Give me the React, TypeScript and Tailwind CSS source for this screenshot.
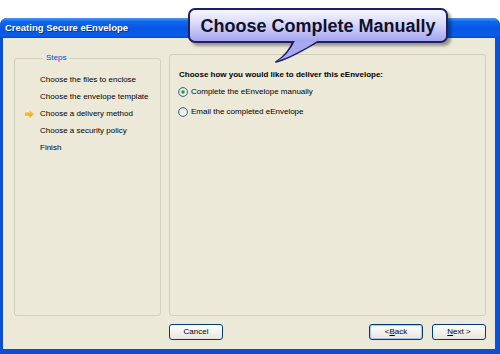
import React from "react";

const font = { fontFamily: '"Liberation Sans", Arial, sans-serif' };

function Radio({ checked }: { checked?: boolean }) {
  return (
    <svg width="10" height="10" viewBox="0 0 10 10" className="shrink-0">
      <defs>
        <linearGradient id={checked ? "rg1" : "rg2"} x1="0" y1="0" x2="1" y2="1">
          <stop offset="0" stopColor="#DCDCD6" />
          <stop offset="1" stopColor="#FFFFFF" />
        </linearGradient>
      </defs>
      <circle cx="5" cy="5" r="4.4" fill={`url(#${checked ? "rg1" : "rg2"})`} stroke="#1C5180" strokeWidth="0.9" />
      {checked && <circle cx="5" cy="5" r="1.8" fill="#21A121" />}
    </svg>
  );
}

function Btn({ children, def }: { children: React.ReactNode; def?: boolean }) {
  return (
    <div
      className={`w-[54px] h-[16px] rounded-[3px] border border-[#003C74] bg-gradient-to-b from-white to-[#E6E5DE] flex items-center justify-center text-[8px] text-black ${def ? "shadow-[inset_0_0_0_1px_#A9C4F5]" : ""}`}
      style={font}
    >
      {children}
    </div>
  );
}

export default function App() {
  return (
    <div className="relative w-[500px] h-[354px] bg-white overflow-hidden" style={font}>
      <div className="absolute left-0 top-[18px] w-[500px] h-[336px] flex flex-col rounded-t-[7px] bg-[#0A4FD8] overflow-hidden">
        <div className="h-[20px] shrink-0 flex items-center pl-[5px] bg-[linear-gradient(to_bottom,#4A98F8_0%,#1066EA_18%,#0556E4_55%,#0A5CE8_88%,#0648CC_100%)]">
          <span className="text-white text-[9.5px] font-bold [text-shadow:1px_1px_0_#0A2F9A]">Creating Secure eEnvelope</span>
        </div>
        <div className="flex-1 ml-[3px] mr-[5px] mb-[5px] bg-[#ECE9D8] flex flex-col pt-[15px] pl-[11px] pr-[9px] pb-[9px]">
          <div className="flex gap-[8px] h-[263px]">
            <fieldset className="w-[147px] border border-[#D0D0BF] rounded-[3px] pl-[25px] pt-[8px]">
              <legend className="ml-[3px] px-[3px] text-[8px] text-[#0046D5] leading-[10px]">Steps</legend>
              <div className="flex flex-col text-[8px] text-black leading-[17px]">
                <span>Choose the files to enclose</span>
                <span>Choose the envelope template</span>
                <span className="relative">
                  <svg className="absolute left-[-15px] top-[5px]" width="9" height="8" viewBox="0 0 9 8">
                    <defs>
                      <linearGradient id="ar" x1="0" y1="0" x2="0" y2="1">
                        <stop offset="0" stopColor="#FCD650" />
                        <stop offset="1" stopColor="#E0A010" />
                      </linearGradient>
                    </defs>
                    <path d="M0 2.2 H4.5 V0 L9 4 L4.5 8 V5.8 H0 Z" fill="url(#ar)" />
                  </svg>
                  Choose a delivery method
                </span>
                <span>Choose a security policy</span>
                <span>Finish</span>
              </div>
            </fieldset>
            <div className="flex-1 border border-[#D0D0BF] rounded-[3px] pl-[9px] pt-[15px] mt-[1px]">
              <div className="text-[8px] font-bold text-black leading-[10px]">Choose how you would like to deliver this eEnvelope:</div>
              <div className="flex items-center gap-[3px] mt-[7px] -ml-[1px] text-[8px] leading-[10px]">
                <Radio checked />
                <span>Complete the eEnvelope manually</span>
              </div>
              <div className="flex items-center gap-[3px] mt-[10px] -ml-[1px] text-[8px] leading-[10px]">
                <Radio />
                <span>Email the completed eEnvelope</span>
              </div>
            </div>
          </div>
          <div className="flex items-center mt-[8px] pl-[155px] pr-[0px]">
            <Btn>Cancel</Btn>
            <div className="flex-1" />
            <div className="flex gap-[9px]">
              <Btn def>
                &lt; <span className="underline">B</span>ack
              </Btn>
              <Btn>
                <span className="underline">N</span>ext &gt;
              </Btn>
            </div>
          </div>
        </div>
      </div>

      {/* callout bubble */}
      <svg className="absolute left-[266px] top-[36px]" width="62" height="30" viewBox="0 0 62 30">
        <defs>
          <linearGradient id="tail" x1="0" y1="0" x2="0" y2="1">
            <stop offset="0" stopColor="#A8A8F2" />
            <stop offset="1" stopColor="#7070D8" />
          </linearGradient>
        </defs>
        <path d="M28 4 C24 14 18 21 10 26 C24 22 38 14 54 4 Z" fill="url(#tail)" stroke="#1E2060" strokeWidth="1.8" strokeLinejoin="round" />
      </svg>
      <div className="absolute left-[188px] top-[8px] w-[260px] h-[35px] rounded-[7px] border-2 border-[#1E2060] bg-[linear-gradient(to_bottom,#F6F6FF_0%,#D8D8FA_45%,#A4A4EE_100%)] shadow-[3px_3px_3px_rgba(0,0,0,0.35)] flex items-center justify-center">
        <span className="text-[18px] font-bold text-[#10102A] leading-none whitespace-nowrap" style={font}>
          Choose Complete Manually
        </span>
      </div>
      <svg className="absolute left-[266px] top-[36px] pointer-events-none" width="62" height="30" viewBox="0 0 62 30">
        <path d="M29 4.5 C25 14 19 21 11 25 C24 21 37 14 52 4.5 Z" fill="#A8A8F2" />
      </svg>
    </div>
  );
}
